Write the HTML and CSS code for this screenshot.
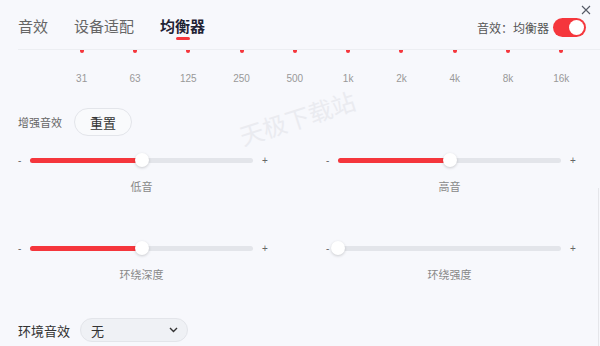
FILE: index.html
```html
<!DOCTYPE html>
<html lang="zh-CN">
<head>
    <meta charset="UTF-8">
    <title>音效设置</title>
    <link rel="stylesheet" href="styles.css">
</head>
<body>
    <div class="header">
        <div class="tabs">
            <span class="tab">音效</span>
            <span class="tab">设备适配</span>
            <span class="tab active">均衡器</span>
        </div>
        <div class="mode">
            <span>音效：均衡器</span>
            <span class="switch"><span class="switch-knob"></span></span>
        </div>
    </div>
    <svg class="close" width="10" height="10" viewBox="0 0 10 10"><path d="M1 1L9 9M9 1L1 9" stroke="#555a66" stroke-width="1.1" fill="none"/></svg>

    <div class="eq">
        <div class="eq-col"><i class="dot"></i><span>31</span></div>
        <div class="eq-col"><i class="dot"></i><span>63</span></div>
        <div class="eq-col"><i class="dot"></i><span>125</span></div>
        <div class="eq-col"><i class="dot"></i><span>250</span></div>
        <div class="eq-col"><i class="dot"></i><span>500</span></div>
        <div class="eq-col"><i class="dot"></i><span>1k</span></div>
        <div class="eq-col"><i class="dot"></i><span>2k</span></div>
        <div class="eq-col"><i class="dot"></i><span>4k</span></div>
        <div class="eq-col"><i class="dot"></i><span>8k</span></div>
        <div class="eq-col"><i class="dot"></i><span>16k</span></div>
    </div>

    <div class="enhance">
        <span class="enhance-label">增强音效</span>
        <button class="reset-btn">重置</button>
    </div>

    <div class="sliders">
        <div class="slider">
            <div class="slider-row">
                <span class="minus">-</span>
                <div class="track"><div class="fill" style="width:50%"></div><div class="thumb" style="left:50%"></div></div>
                <span class="plus">+</span>
            </div>
            <div class="slider-label">低音</div>
        </div>
        <div class="slider">
            <div class="slider-row">
                <span class="minus">-</span>
                <div class="track"><div class="fill" style="width:50%"></div><div class="thumb" style="left:50%"></div></div>
                <span class="plus">+</span>
            </div>
            <div class="slider-label">高音</div>
        </div>
        <div class="slider">
            <div class="slider-row">
                <span class="minus">-</span>
                <div class="track"><div class="fill" style="width:50%"></div><div class="thumb" style="left:50%"></div></div>
                <span class="plus">+</span>
            </div>
            <div class="slider-label">环绕深度</div>
        </div>
        <div class="slider">
            <div class="slider-row">
                <span class="minus">-</span>
                <div class="track"><div class="fill" style="width:0%"></div><div class="thumb" style="left:0%"></div></div>
                <span class="plus">+</span>
            </div>
            <div class="slider-label">环绕强度</div>
        </div>
    </div>

    <div class="env">
        <span class="env-label">环境音效</span>
        <div class="select">
            <span>无</span>
            <svg width="9" height="6" viewBox="0 0 9 6"><path d="M1 1L4.5 4.5L8 1" stroke="#333" stroke-width="1.4" fill="none"/></svg>
        </div>
    </div>

    <div class="watermark">天极下载站</div>
    <div class="edge"></div>
</body>
</html>
```

FILE: styles.css
```css
body { margin: 0; width: 600px; height: 346px; overflow: hidden; position: relative; background: #f7f8fc; font-family: "Liberation Sans", "Noto Sans CJK SC", sans-serif; color: #333; }

.header { display: flex; justify-content: space-between; margin-left: 18px; padding-right: 14px; height: 49px; border-bottom: 1px solid #eceef2; }
.tabs { display: flex; gap: 26px; padding-top: 17px; }
.tab { position: relative; font-size: 15px; line-height: 20px; height: 20px; color: #666; }
.tab.active { color: #1f2233; font-weight: bold; }
.tab.active::after { content: ""; position: absolute; left: 50%; margin-left: -7px; top: 20px; width: 14px; height: 2.5px; border-radius: 2px; background: #f5363c; }
.mode { display: flex; align-items: center; gap: 4px; height: 20px; padding-top: 17px; font-size: 12px; color: #555; }
.switch { position: relative; width: 33px; height: 19px; border-radius: 10px; background: #f5363c; }
.switch-knob { position: absolute; right: 2px; top: 2px; width: 15px; height: 15px; border-radius: 50%; background: #fff; }
.close { position: absolute; left: 581px; top: 5px; }

.eq { display: flex; width: 533px; padding-left: 55px; }
.eq-col { flex: 1; display: flex; flex-direction: column; align-items: center; }
.dot { display: block; width: 4px; height: 3px; border-radius: 0 0 2px 2px; background: #f5363c; }
.eq-col span { margin-top: 19px; font-size: 10px; line-height: 14px; color: #999; }

.enhance { display: flex; align-items: center; gap: 12px; margin: 22px 0 0 18px; }
.enhance-label { font-size: 11px; color: #666; }
.reset-btn { width: 58px; height: 28px; padding: 0; border: 1px solid #e3e5ea; border-radius: 14px; background: #f9fafc; font-family: inherit; font-size: 13px; color: #333; }

.sliders { display: grid; grid-template-columns: 250px 250px; column-gap: 58px; row-gap: 47px; margin: 17px 0 0 18px; }
.slider-row { display: flex; align-items: center; height: 14px; }
.minus { width: 12px; font-size: 10px; color: #666; }
.plus { margin-left: 9px; font-size: 10px; color: #666; }
.track { position: relative; width: 223px; height: 5px; border-radius: 3px; background: #e3e5ea; }
.fill { height: 100%; border-radius: 3px; background: #f5363c; }
.thumb { position: absolute; top: 50%; width: 14px; height: 14px; margin: -7px 0 0 -7px; border-radius: 50%; background: #fff; box-shadow: 0 1px 3px rgba(0, 0, 0, 0.18); }
.slider-label { width: 223px; margin: 13px 0 0 12px; text-align: center; font-size: 11px; line-height: 14px; color: #888; }

.env { display: flex; align-items: center; gap: 10px; margin: 36px 0 0 18px; }
.env-label { font-size: 13px; color: #333; }
.select { display: flex; align-items: center; justify-content: space-between; box-sizing: border-box; width: 108px; height: 24px; padding: 0 9px 0 10px; border: 1px solid #e3e5ea; border-radius: 12px; background: #eff1f5; font-size: 13px; }

.watermark { position: absolute; left: 237px; top: 100px; font-size: 24px; color: #eaebf0; transform: rotate(-18deg); pointer-events: none; }
.edge { position: absolute; right: 1px; top: 188px; bottom: 0; width: 1px; background: #e5e6ea; }
```
